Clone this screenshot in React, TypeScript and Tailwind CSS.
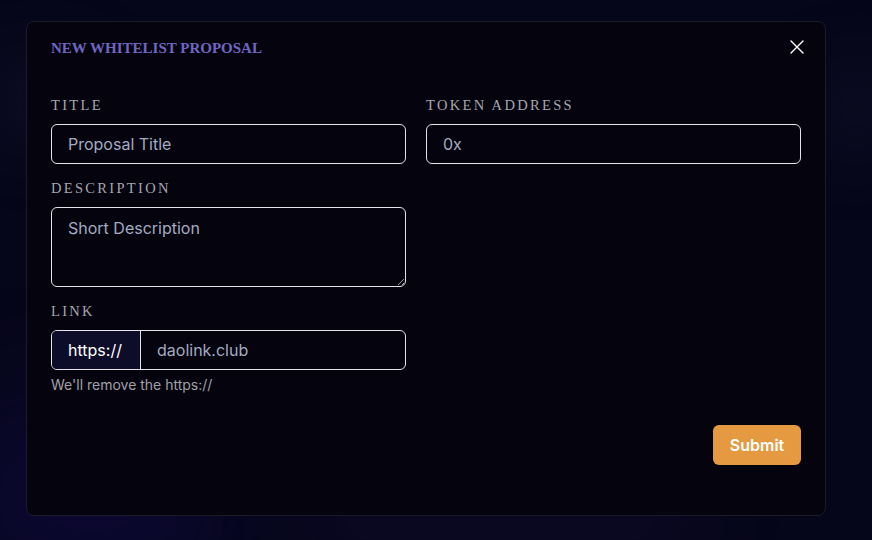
import { X } from 'lucide-react';

const serif = "font-['Liberation_Serif','DejaVu_Serif',serif]";
const sans = "font-['Inter','Noto_Sans',sans-serif]";

const Label = ({ children }: { children: string }) => (
  <label className={`block ${serif} text-[14.5px] leading-5 tracking-[0.16em] text-[#a6a6b0] mb-[9px]`}>
    {children}
  </label>
);

const inputCls =
  'w-full h-10 rounded-md border border-[#e4e4ea] bg-transparent px-4 text-[16px] text-white placeholder:text-[#a3abc2] outline-none';

export default function App() {
  return (
    <div className={`relative min-h-[540px] w-full overflow-hidden bg-[#06061a] ${sans}`}>
      {/* blurred page behind the modal */}
      <div className="absolute left-[-40px] top-[420px] h-[160px] w-[260px] rounded-full bg-[#120a4a] opacity-60 blur-3xl" />
      <div className="absolute left-[0px] top-[70px] h-[60px] w-[90px] rounded-full bg-[#1a1a34] opacity-70 blur-2xl" />
      <div className="absolute right-[-20px] top-[80px] h-[60px] w-[70px] rounded-full bg-[#1a1a34] opacity-70 blur-2xl" />
      <div className="absolute left-[300px] top-[490px] h-[60px] w-[400px] rounded-full bg-[#140a30] opacity-60 blur-2xl" />

      <div className="relative pl-[26px] pt-[21px]">
        <div className="w-[800px] h-[495px] rounded-lg border border-[#1c1c28] bg-[#05040e] px-6 pt-4">
          <div className="flex h-5 items-center justify-between">
            <h2 className={`${serif} text-[15px] font-bold text-[#6f66c2]`}>NEW WHITELIST PROPOSAL</h2>
            <X className="mr-[-8px] mt-[-2px] h-6 w-6 text-white" strokeWidth={1.4} />
          </div>

          <div className="mt-[37px] grid grid-cols-[355px_1fr] gap-x-5">
            <div>
              <Label>TITLE</Label>
              <input className={inputCls} placeholder="Proposal Title" />

              <div className="mt-[14px]">
                <Label>DESCRIPTION</Label>
                <textarea
                  className="block h-20 w-full rounded-md border border-[#e4e4ea] bg-transparent px-4 py-2 text-[16px] text-white placeholder:text-[#a3abc2] outline-none"
                  placeholder="Short Description"
                />
              </div>

              <div className="mt-[14px]">
                <Label>LINK</Label>
                <div className="flex h-10 overflow-hidden rounded-md border border-[#e4e4ea]">
                  <span className="flex w-[89px] shrink-0 items-center border-r border-[#e4e4ea] bg-[#0e0d29] px-4 text-[16px] text-white">
                    https://
                  </span>
                  <input
                    className="w-full bg-transparent px-4 text-[16px] text-white placeholder:text-[#a3abc2] outline-none"
                    placeholder="daolink.club"
                  />
                </div>
                <p className="mt-[5px] text-[14px] leading-5 text-[#a0a0a8]">We'll remove the https://</p>
              </div>
            </div>

            <div>
              <Label>TOKEN ADDRESS</Label>
              <input className={inputCls} placeholder="0x" />
            </div>
          </div>

          <div className="mt-[30px] flex justify-end">
            <button className="h-10 w-[88px] rounded-md bg-[#e59a42] text-[16px] font-semibold text-white">
              Submit
            </button>
          </div>
        </div>
      </div>
    </div>
  );
}
